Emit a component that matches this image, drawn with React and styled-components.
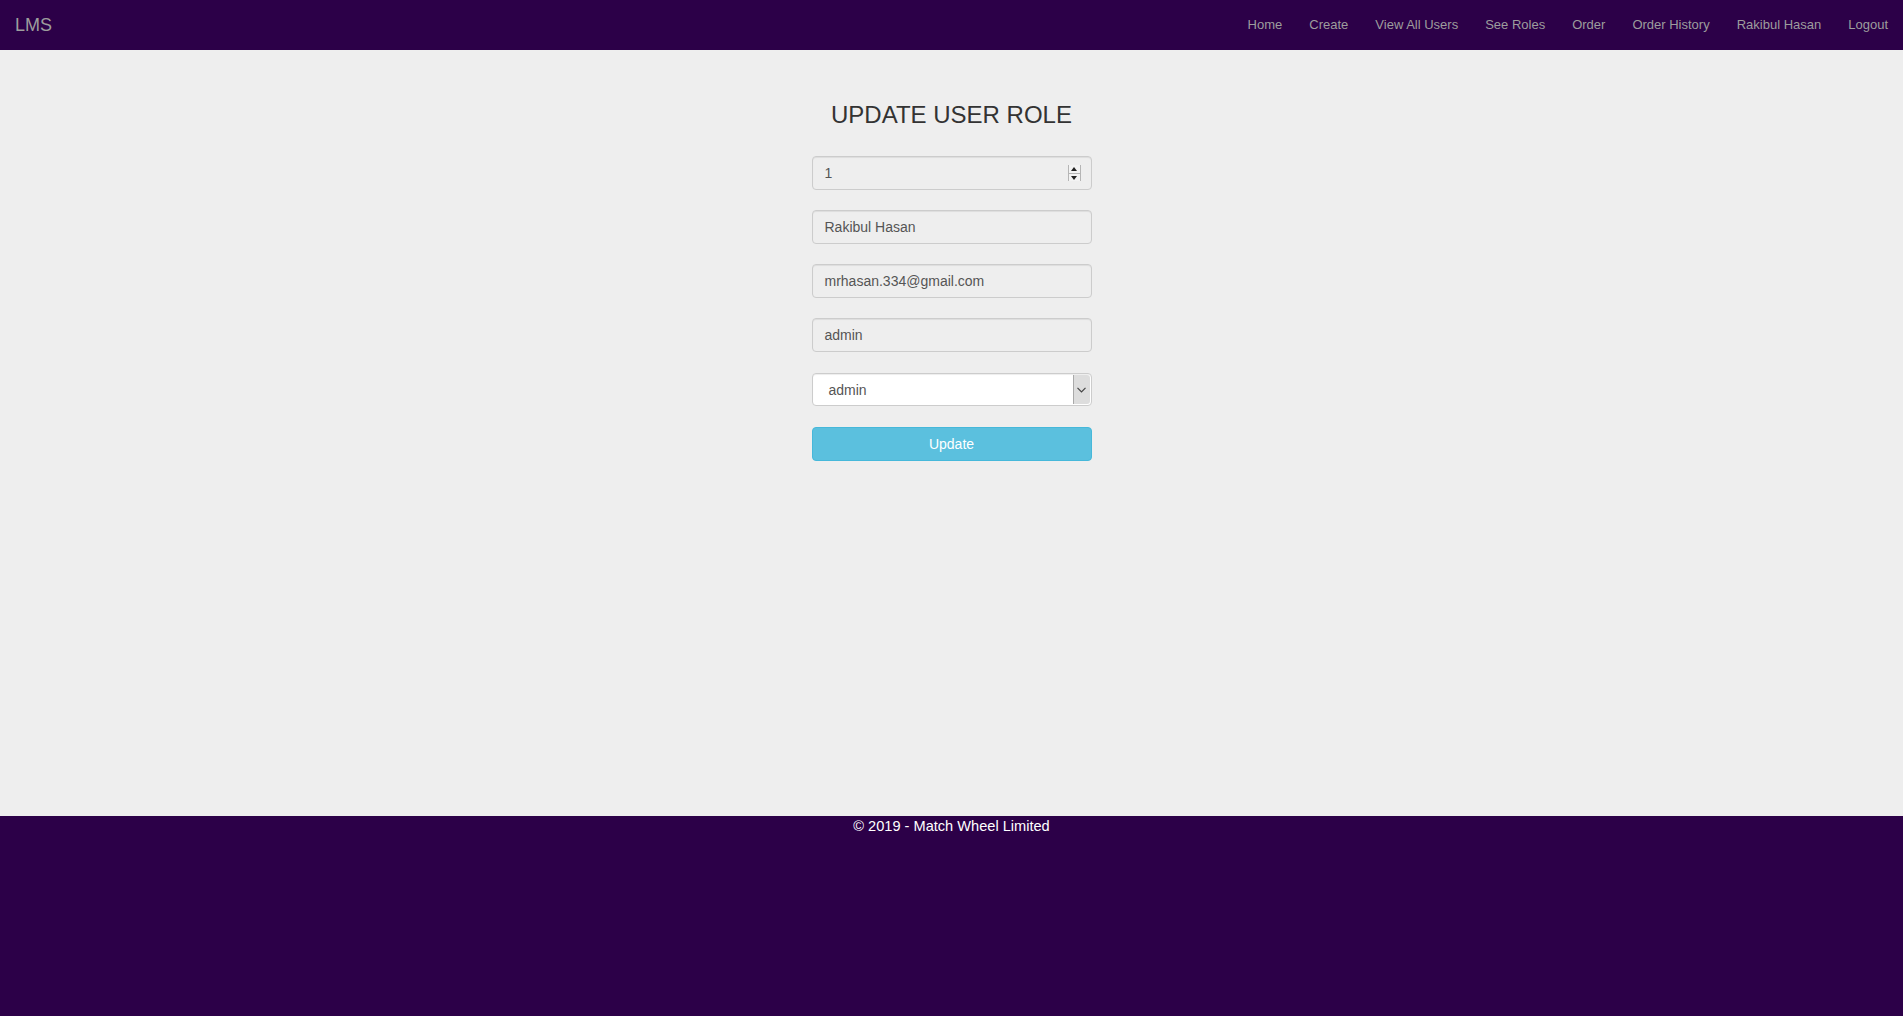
import React from 'react';
import styled, {createGlobalStyle} from "styled-components";

const GlobalStyle = createGlobalStyle`
  html, body {
    margin: 0;
    padding: 0;
    background: #eeeeee;
    font-family: "Liberation Sans", Arial, sans-serif;
    font-size: 14px;
    color: #333;
  }
  * {
    box-sizing: border-box;
  }
`

const Page = styled.div`
  min-height: 100vh;
  display: flex;
  flex-direction: column;
`

const Navbar = styled.nav`
  height: 50px;
  background-color: #2c0048;
  display: flex;
  justify-content: space-between;
  align-items: stretch;
`

const Brand = styled.a`
  padding: 15px 15px;
  font-size: 18px;
  line-height: 20px;
  color: #9d9d9d;
  text-decoration: none;
`

const NavList = styled.ul`
  display: flex;
  list-style: none;
  margin: 0;
  padding: 0;
`

const NavItem = styled.li`
  display: block;
`

const NavLink = styled.a`
  display: block;
  padding: 15px 13.5px;
  font-size: 13px;
  line-height: 20px;
  color: #9d9d9d;
  text-decoration: none;
  ${NavItem}:last-child & {
    padding-right: 15px;
  }
`

const Main = styled.main`
  flex: 1;
  display: flex;
  flex-direction: column;
  align-items: center;
  padding-top: 52px;
`

const Title = styled.h2`
  margin: 0;
  font-size: 24px;
  font-weight: 400;
  line-height: 1.1;
  color: #333;
`

const Form = styled.form`
  width: 280px;
  margin-top: 28px;
  display: flex;
  flex-direction: column;
  gap: 20px;
`

const Field = styled.div`
  height: 34px;
  display: flex;
  align-items: center;
  justify-content: space-between;
  padding: 6px 12px;
  font-size: 14px;
  line-height: 20px;
  color: #555;
  background-color: #eee;
  border: 1px solid #ccc;
  border-radius: 4px;
  box-shadow: inset 0 1px 1px rgba(0, 0, 0, .075);
`

const SelectField = styled(Field)`
  padding: 0 0 0 16px;
  background-color: #fff;
  height: 33px;
  margin-top: 1px;
`

const SelectArrow = styled.div`
  width: 17px;
  align-self: stretch;
  margin: 1px 1px 1px 0;
  background: #dddddd;
  border-left: 1px solid #a9a9a9;
  border-radius: 0 3px 3px 0;
  display: flex;
  align-items: center;
  justify-content: center;
`

const Spinner = styled.div`
  width: 13px;
  height: 16px;
  margin-right: -2px;
  display: flex;
  flex-direction: column;
  border-left: 1px solid #b5b5b5;
  border-right: 1px solid #b5b5b5;
  background: #f3f3f3;
`

const SpinHalf = styled.div`
  flex: 1;
  display: flex;
  align-items: center;
  justify-content: center;
  border-top: ${props => props.$down ? '1px solid #b5b5b5' : 'none'};
  &::after {
    content: "";
    border-left: 3px solid transparent;
    border-right: 3px solid transparent;
    ${props => props.$down
        ? 'border-top: 4px solid #222;'
        : 'border-bottom: 4px solid #222;'}
  }
`

const UpdateButton = styled.button`
  height: 34px;
  padding: 6px 12px;
  font-family: inherit;
  font-size: 14px;
  line-height: 20px;
  color: #fff;
  background-color: #5bc0de;
  border: 1px solid #46b8da;
  border-radius: 4px;
  margin-top: 1px;
  cursor: pointer;
`

const Footer = styled.footer`
  height: 200px;
  background-color: #2c0048;
  color: #fff;
  text-align: center;
  font-size: 14.6px;
  line-height: 20px;
`

const links = ['Home', 'Create', 'View All Users', 'See Roles', 'Order', 'Order History', 'Rakibul Hasan', 'Logout'];

const App = () => {
    return (
        <Page>
            <GlobalStyle/>
            <Navbar>
                <Brand href="#">LMS</Brand>
                <NavList>
                    {links.map(l => <NavItem key={l}><NavLink href="#">{l}</NavLink></NavItem>)}
                </NavList>
            </Navbar>
            <Main>
                <Title>UPDATE USER ROLE</Title>
                <Form onSubmit={e => e.preventDefault()}>
                    <Field>
                        <span>1</span>
                        <Spinner>
                            <SpinHalf/>
                            <SpinHalf $down/>
                        </Spinner>
                    </Field>
                    <Field>Rakibul Hasan</Field>
                    <Field>mrhasan.334@gmail.com</Field>
                    <Field>admin</Field>
                    <SelectField>
                        <span>admin</span>
                        <SelectArrow>
                            <svg width="9" height="6" viewBox="0 0 9 6">
                                <path d="M0.5 0.8 L4.5 4.8 L8.5 0.8" fill="none" stroke="#444" strokeWidth="1.2"/>
                            </svg>
                        </SelectArrow>
                    </SelectField>
                    <UpdateButton type="submit">Update</UpdateButton>
                </Form>
            </Main>
            <Footer>© 2019 - Match Wheel Limited</Footer>
        </Page>
    )
}

export default App;
